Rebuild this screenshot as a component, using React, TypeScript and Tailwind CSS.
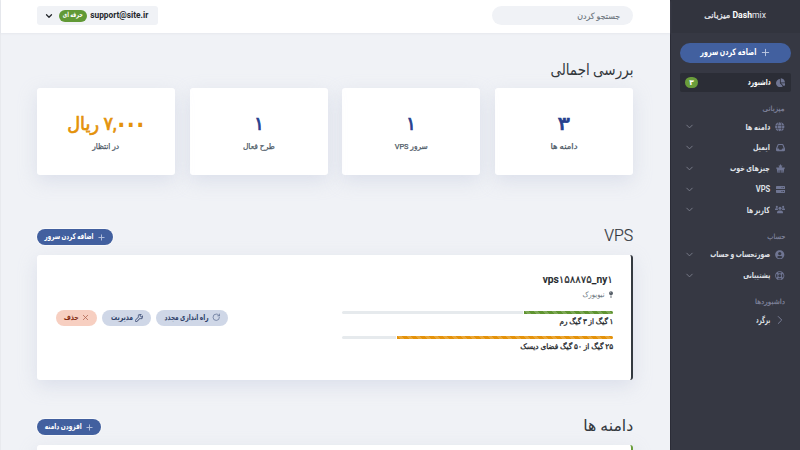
import { useLayoutEffect, useRef } from 'react';
import type { ReactNode } from 'react';
import { FaChartPie, FaGlobe, FaUserCircle, FaRegLifeRing, FaMapPin } from 'react-icons/fa';
import { SlWrench } from 'react-icons/sl';
import { ChevronDown, ChevronRight, Plus, RotateCw, X } from 'lucide-react';

// A single line of text condensed to an exact width, anchored at its right edge.
function Fit({ w, className = '', children }: { w: number; className?: string; children: ReactNode }) {
  const ref = useRef<HTMLSpanElement>(null);
  useLayoutEffect(() => {
    const el = ref.current;
    if (!el) return;
    const apply = () => {
      el.style.transform = 'none';
      const natural = el.getBoundingClientRect().width;
      if (natural) el.style.transform = `scaleX(${w / natural})`;
    };
    apply();
    document.fonts.ready.then(apply);
  }, [w]);
  return (
    <span className={`flex shrink-0 justify-start whitespace-nowrap ${className}`} style={{ width: w }}>
      <span ref={ref} className="block shrink-0 origin-right">{children}</span>
    </span>
  );
}

const InboxIcon = () => (
  <svg width="9" height="9" viewBox="0 0 18 18" fill="currentColor" fillRule="evenodd">
    <path d="M5 2h8a2 2 0 0 1 1.900 1.400L18 11v3a2.500 2.500 0 0 1-2.500 2.500h-13A2.500 2.500 0 0 1 0 14v-3l3.100-7.600A2 2 0 0 1 5 2Zm.2 2.200L2.600 11H5.500l1.400 2.400h4.200L12.500 11h2.900l-2.600-6.800Z" />
  </svg>
);

const BasketIcon = () => (
  <svg width="9" height="9" viewBox="0 0 18 18" fill="currentColor">
    <path d="M9 0l1.500 2.800 3 .5-2.100 2.200.2 1.500H17.500v2.500H16.500l-1.500 8h-2.300v-5h-1.400v5H9.700v-5H8.300v5H6.700v-5H5.300v5H3l-1.500-8H.5V7h5.900l.2-1.500-2.100-2.200 3-.5Z" />
  </svg>
);

const ServerIcon = () => (
  <svg width="9" height="9" viewBox="0 0 18 18" fill="currentColor" fillRule="evenodd">
    <path d="M1.500 2h15A1.500 1.500 0 0 1 18 3.500V8H0V3.500A1.500 1.500 0 0 1 1.500 2ZM11 4.300v1.700h1.700V4.300Zm3 0v1.700h1.700V4.300ZM0 10h18v4.500a1.500 1.500 0 0 1-1.500 1.500h-15A1.500 1.500 0 0 1 0 14.500Zm11 2.200v1.700h1.700v-1.700Zm3 0v1.700h1.700v-1.700Z" />
  </svg>
);

const UsersIcon = () => (
  <svg width="11" height="9" viewBox="0 0 22 18" fill="currentColor">
    <circle cx="4" cy="3.300" r="2.300" />
    <circle cx="18" cy="3.300" r="2.300" />
    <circle cx="11" cy="6.500" r="3.300" />
    <path d="M0 10V9a2.500 2.500 0 0 1 2.500-2.500h3.300A5 5 0 0 0 7 10ZM22 10V9a2.500 2.500 0 0 0-2.500-2.500h-3.300A5 5 0 0 1 15 10ZM4.500 17v-1.800A4.200 4.200 0 0 1 8.700 11h4.600a4.200 4.200 0 0 1 4.200 4.200V17Z" />
  </svg>
);

function NavItem({ icon, label, w }: { icon: ReactNode; label: string; w: number }) {
  return (
    <li className="flex h-[20.75px] items-center pr-[15px] pb-[1px] pl-[13px]">
      <span className="flex w-[10px] justify-center text-[9.5px] text-[#6f7592]">{icon}</span>
      <Fit w={w} className="mr-[5px] text-[8.5px] font-bold text-[#dfe0e6]">{label}</Fit>
      <ChevronDown className="mr-auto text-[#7c7f8c]" size={11} strokeWidth={2} />
    </li>
  );
}

function Heading({ label, w, className }: { label: string; w: number; className: string }) {
  return (
    <div className={`flex h-[12px] items-center pr-[15px] ${className}`}>
      <Fit w={w} className="text-[7px] text-[#81869f] [-webkit-text-stroke:0.2px_currentColor]">{label}</Fit>
    </div>
  );
}

function Stat({ value, vw, label, lw, color }: { value: ReactNode; vw: number; label: string; lw: number; color: string }) {
  return (
    <div className="flex h-[87px] flex-1 flex-col items-center rounded-[3px] bg-white pt-[24px] shadow-[0_6px_18px_rgba(190,197,220,0.42)]">
      <Fit w={vw} className={`h-[25px] items-center text-[18.5px] [-webkit-text-stroke:0.7px_currentColor] ${color}`}>{value}</Fit>
      <Fit w={lw} className="mt-[3.5px] h-[12px] items-center text-[8px] text-[#4c5965] [-webkit-text-stroke:0.25px_currentColor]">{label}</Fit>
    </div>
  );
}

function AddButton({ label, w, className }: { label: string; w: number; className: string }) {
  return (
    <button className={`flex h-[16px] items-center rounded-full bg-[#42609f] pr-[7px] text-white shadow-[0_0_0_1px_rgba(255,255,255,0.6)] ${className}`}>
      <Plus size={9} strokeWidth={2.5} className="text-[#b4c1de]" />
      <Fit w={w} className="mr-[3px] text-[8px] font-bold">{label}</Fit>
    </button>
  );
}

function Bar({ fill, color }: { fill: string; color: string }) {
  return (
    <div className="flex h-[3px] w-[271px] overflow-hidden rounded-full bg-[#e6eaed]">
      <div className={`${fill} ${color} h-full bg-[linear-gradient(45deg,rgba(255,255,255,.18)_25%,transparent_25%,transparent_50%,rgba(255,255,255,.18)_50%,rgba(255,255,255,.18)_75%,transparent_75%)] bg-[length:9px_9px]`} />
      <div className="w-px bg-white" />
    </div>
  );
}

export default function App() {
  return (
    <div dir="rtl" className="flex h-[450px] w-[800px] overflow-hidden bg-[#f0f2f6] font-[Roboto,'DejaVu_Sans',sans-serif] leading-none">
      <aside className="h-full w-[130px] shrink-0 border-l border-[#2b2c37] bg-[#363843]">
        <div className="flex h-[33px] items-center justify-center bg-[#32343e] pr-[1px] pb-[2px] text-[8.5px] text-[#e5e6eb]">
          <Fit w={33.5}><b className="text-white">Dash</b>mix</Fit>
          <Fit w={26} className="mr-[3px]"><span className="[-webkit-text-stroke:0.3px_currentColor]">میزبانی</span></Fit>
        </div>
        <div className="px-[9px] pt-[10px]">
          <button className="flex h-[20px] w-full items-center rounded-full bg-[#42609f] pr-[20.5px] pb-[2px]">
            <Plus size={11} strokeWidth={2} className="text-[#c0cae2]" />
            <Fit w={56} className="mr-[3px] text-[9px] font-bold text-white">اضافه کردن سرور</Fit>
          </button>
          <div className="mt-[10px] flex h-[19px] items-center rounded-[2px] bg-[#2b2d36] pr-[6px] pl-[5px]">
            <FaChartPie className="text-[9.5px] text-[#6f7592]" />
            <Fit w={23} className="mr-[5px] text-[8.5px] font-bold text-white">داشبورد</Fit>
            <span className="mr-auto flex h-[11px] w-[13px] items-center justify-center rounded-full bg-[#6a9d3b] text-[7.5px] font-bold text-white">۳</span>
          </div>
        </div>
        <Heading label="میزبانی" w={22} className="mt-[11px]" />
        <ul className="mt-[2px]">
          <NavItem icon={<FaGlobe />} label="دامنه ها" w={25} />
          <NavItem icon={<InboxIcon />} label="ایمیل" w={17} />
          <NavItem icon={<BasketIcon />} label="چیزهای خوب" w={40} />
          <NavItem icon={<ServerIcon />} label="VPS" w={14.5} />
          <NavItem icon={<UsersIcon />} label="کاربر ها" w={23} />
        </ul>
        <Heading label="حساب" w={18} className="mt-[11px]" />
        <ul className="pt-[1px]">
          <NavItem icon={<FaUserCircle />} label="صورتحساب و حساب" w={60} />
          <NavItem icon={<FaRegLifeRing />} label="پشتیبانی" w={27} />
        </ul>
        <Heading label="داشبوردها" w={30} className="mt-[10px]" />
        <div className="mt-[1px] flex h-[21px] items-center pr-[13px]">
          <ChevronRight size={14} strokeWidth={1.6} className="text-[#7b809a]" />
          <Fit w={14} className="mr-[3px] text-[8.5px] font-bold text-[#dfe0e6]">برگرد</Fit>
        </div>
      </aside>

      <div className="flex min-w-0 flex-1 flex-col border-l border-[#e8eaee]">
        <header className="flex h-[33px] shrink-0 items-center justify-between bg-white pr-[37px] pl-[36px] shadow-[0_1px_2px_rgba(200,205,216,0.25)]">
          <div className="mt-[-2px] flex h-[19px] w-[141px] items-center rounded-full bg-[#f0f2f6] pr-[13px]">
            <Fit w={43} className="pt-[1px] text-[8.5px] text-[#6b747d] [-webkit-text-stroke:0.15px_currentColor]">جستجو کردن</Fit>
          </div>
          <div className="mt-[-2px] flex h-[19px] w-[121px] items-center rounded-[3px] bg-[#f0f2f6] pr-[9.5px]">
            <Fit w={58} className="text-[8.5px] font-bold text-[#24272c]"><bdi>support@site.ir</bdi></Fit>
            <span className="mr-[4px] flex h-[12px] w-[28px] items-center justify-center rounded-full bg-[#619936] text-white">
              <Fit w={20} className="text-[7px] font-bold">حرفه ای</Fit>
            </span>
            <ChevronDown size={10} strokeWidth={3} className="mr-[5px] text-[#24272c]" />
          </div>
        </header>

        <main className="flex flex-col pr-[37px] pl-[36px]">
          <h2 className="mt-[26px] flex h-[22px] items-center text-[#33383d]">
            <Fit w={83} className="text-[16px]">بررسی اجمالی</Fit>
          </h2>
          <div className="mt-[7px] flex gap-[14.5px]">
            <Stat value="۳" vw={12.5} label="دامنه ها" lw={27} color="text-[#263f8e]" />
            <Stat value="۱" vw={10} label="سرور VPS" lw={33} color="text-[#263f8e]" />
            <Stat value="۱" vw={10} label="طرح فعال" lw={32} color="text-[#263f8e]" />
            <Stat value={<>۷,<span className="[-webkit-text-stroke:1.8px_currentColor]">۰۰۰</span> ریال</>} vw={78} label="در انتظار" lw={27} color="text-[#e4920a]" />
          </div>

          <div className="mt-[50px] flex h-[24px] items-center justify-between text-[#33383d]">
            <Fit w={29} className="pb-[1px] text-[16.5px]"><span className="font-light [-webkit-text-stroke:0.2px_currentColor]">VPS</span></Fit>
            <AddButton label="اضافه کردن سرور" w={49} className="w-[76px]" />
          </div>
          <section className="mt-[6px] flex h-[125px] items-center justify-between rounded-[3px] border-r-2 border-[#343a40] bg-white pr-[18px] pl-[19px] shadow-[0_6px_18px_rgba(190,197,220,0.42)]">
            <div className="flex flex-col pb-[9px]">
              <Fit w={70} className="h-[14px] items-center text-[10.5px] font-medium text-[#212529] [-webkit-text-stroke:0.2px_currentColor]"><bdi dir="ltr">vps۱۵۸۸۷۵_ny۱</bdi></Fit>
              <div className="mt-[2px] flex h-[11px] items-center text-[#59616a]">
                <FaMapPin size={7.5} className="w-[4px]" />
                <Fit w={22} className="mr-[4px] text-[7.5px] text-[#6c757d]">نیویورک</Fit>
              </div>
              <div className="mt-[11px]"><Bar fill="w-[89px]" color="bg-[#5f9430]" /></div>
              <Fit w={54} className="mt-[2px] h-[12px] items-center text-[7.5px] text-[#24282c] [-webkit-text-stroke:0.3px_currentColor]">۱ گیگ از ۳ گیگ رم</Fit>
              <div className="mt-[8px]"><Bar fill="w-[216px]" color="bg-[#e4920a]" /></div>
              <Fit w={93} className="mt-[2px] h-[12px] items-center text-[7.5px] text-[#24282c] [-webkit-text-stroke:0.3px_currentColor]">۲۵ گیگ از ۵۰ گیگ فضای دیسک</Fit>
            </div>
            <div className="flex gap-[5px] text-[8px] font-bold text-[#2c3e68]">
              <button className="flex h-[16px] w-[72px] items-center rounded-full bg-[#cfd7e7] pr-[8px]">
                <RotateCw size={8.5} strokeWidth={2} className="text-[#5b6b91]" />
                <Fit w={44} className="mr-[3px]">راه اندازی مجدد</Fit>
              </button>
              <button className="flex h-[16px] w-[49px] items-center rounded-full bg-[#cfd7e7] pr-[8px]">
                <SlWrench size={8} className="text-[#46577e]" stroke="currentColor" strokeWidth={40} />
                <Fit w={22} className="mr-[2px]">مدیریت</Fit>
              </button>
              <button className="flex h-[16px] w-[41px] items-center rounded-full bg-[#f7cfc1] pr-[7px] text-[#842d14]">
                <X size={9} strokeWidth={2} className="text-[#ae624d]" />
                <Fit w={15} className="mr-[2.5px]">حذف</Fit>
              </button>
            </div>
          </section>

          <div className="mt-[35px] flex h-[24px] items-center justify-between text-[#33383d]">
            <Fit w={50} className="text-[15.5px]">دامنه ها</Fit>
            <AddButton label="افزودن دامنه" w={37} className="w-[64px]" />
          </div>
          <section className="mt-[6px] h-[60px] shrink-0 rounded-[3px] border-r-2 border-[#6a9d3b] bg-white shadow-[0_6px_18px_rgba(190,197,220,0.42)]" />
        </main>
      </div>
    </div>
  );
}
